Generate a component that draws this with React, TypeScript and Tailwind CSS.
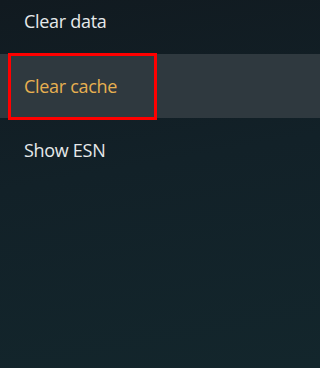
export default function App() {
  return (
    <div className="relative h-[368px] w-full overflow-hidden bg-[linear-gradient(170deg,#111a20_0%,#122128_45%,#13262c_100%)] font-['Open_Sans',sans-serif] text-[18px] font-medium tracking-[-0.3px]">
      <ul className="flex flex-col">
        <li className="flex h-[54px] items-center pb-[11px] pl-6 text-[#e6e9ea]">Clear data</li>
        <li className="relative flex h-16 items-center bg-[#2f393f] pl-6 text-[#e8b050]">
          Clear cache
          <div className="absolute left-2 top-[-1px] h-[67px] w-[149px] border-[3px] border-[#ff0000]" />
        </li>
        <li className="flex h-16 items-center pl-6 text-[#e6e9ea]">Show ESN</li>
      </ul>
    </div>
  );
}
